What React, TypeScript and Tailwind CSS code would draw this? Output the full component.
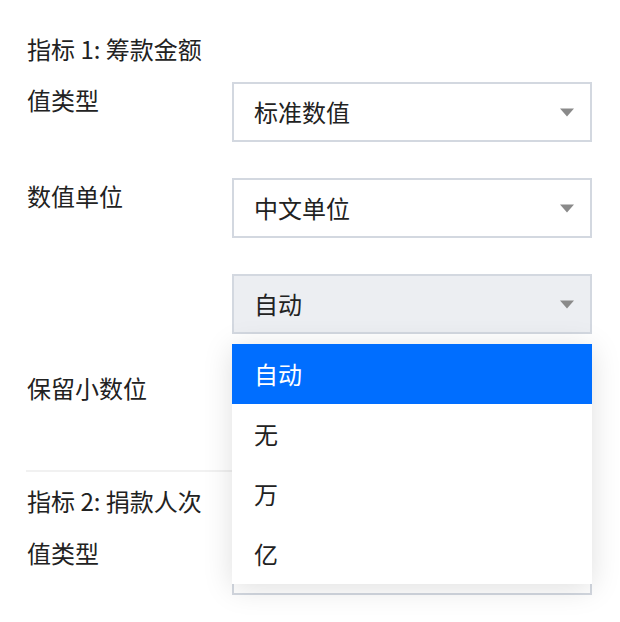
import React from "react";

const font = { fontFamily: '"Noto Sans CJK SC", "Noto Sans", sans-serif' };

function Arrow() {
  return (
    <svg width="16" height="9" viewBox="0 0 16 9" className="shrink-0">
      <path d="M1 0.5 L15 0.5 L8 8.5 Z" fill="#8a8a8a" />
    </svg>
  );
}

function Select({ value, active = false, children }: { value: string; active?: boolean; children?: React.ReactNode }) {
  return (
    <div className="relative w-[360px]">
      <div
        className={`flex h-[60px] items-center justify-between border-2 border-[#d3d8e0] pl-[20px] pr-[15px] ${active ? "bg-[#eceef2]" : "bg-white"}`}
      >
        <span className="text-[24px] leading-none text-[#222]">{value}</span>
        <Arrow />
      </div>
      {children}
    </div>
  );
}

function Row({ label, children }: { label: string; children: React.ReactNode }) {
  return (
    <div className="flex">
      <div className="w-[205px] text-[24px] leading-[36px] text-[#222]">{label}</div>
      {children}
    </div>
  );
}

export default function App() {
  const options = ["自动", "无", "万", "亿"];
  return (
    <div className="h-[622px] w-[620px] overflow-hidden bg-white pl-[27px] pr-[28px] pt-[31px]" style={font}>
      <div className="text-[24px] leading-[36px] text-[#222]">指标 1: 筹款金额</div>
      <div className="mt-[15px] flex flex-col gap-[36px]">
        <Row label="值类型">
          <Select value="标准数值" />
        </Row>
        <Row label="数值单位">
          <Select value="中文单位" />
        </Row>
        <div className="relative z-10">
          <Row label="">
            <Select value="自动" active>
              <div className="absolute left-0 top-[70px] w-[360px] bg-white shadow-[0_4px_28px_rgba(0,0,0,0.13)]">
                {options.map((o, i) => (
                  <div
                    key={o}
                    className={`flex h-[60px] items-center pl-[22px] text-[24px] leading-none ${i === 0 ? "bg-[#006eff] text-white" : "text-[#222]"}`}
                  >
                    {o}
                  </div>
                ))}
              </div>
            </Select>
          </Row>
        </div>
        <Row label="保留小数位">
          <Select value="" />
        </Row>
      </div>
      <div className="ml-[-1px] mt-[40px] h-[2px] bg-[#f1f1f1]" />
      <div className="mt-[11px] text-[24px] leading-[36px] text-[#222]">指标 2: 捐款人次</div>
      <div className="mt-[16px] flex flex-col gap-[36px]">
        <Row label="值类型">
          <Select value="" />
        </Row>
      </div>
    </div>
  );
}
